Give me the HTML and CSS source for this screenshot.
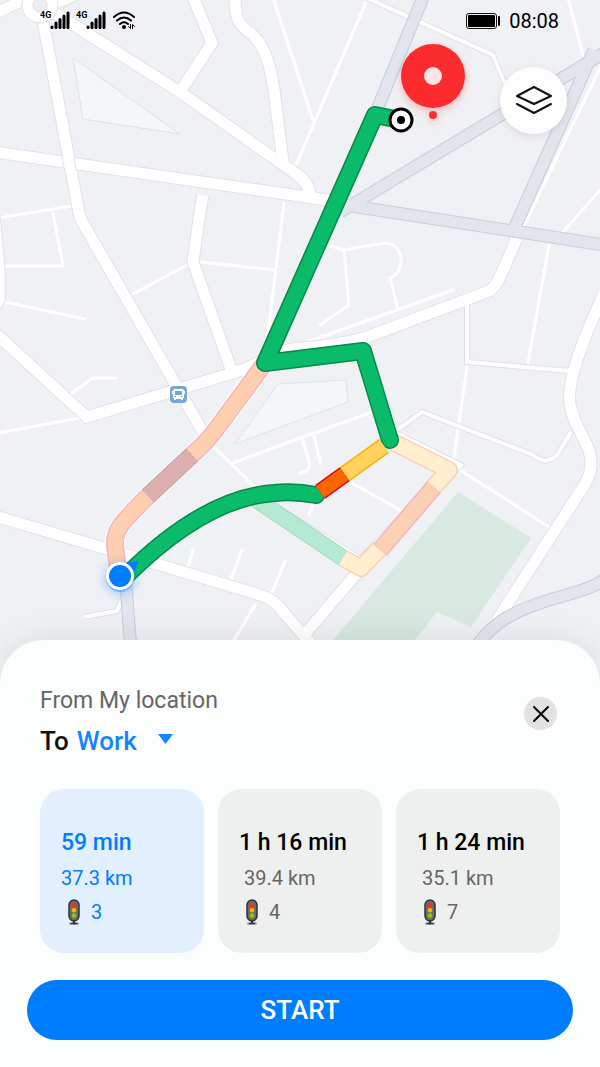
FILE: index.html
```html
<!DOCTYPE html>
<html lang="en">
<head>
    <meta charset="UTF-8">
    <meta name="viewport" content="width=device-width, initial-scale=1.0">
    <title>Routes to Work</title>
    <link rel="stylesheet" href="styles.css">
</head>
<body>
    <main class="map-view">
        <svg class="map" viewBox="0 0 600 700" preserveAspectRatio="xMidYMin slice" role="img" aria-label="Route map">
            <defs>
                <g id="main-roads">
                    <path d="M41,10 L80,218 L203,432"/>
                    <path d="M50,10 L180,92 L295,173 Q311,183 310,200"/>
                    <path d="M193,-3 L212,43 L180,92"/>
                    <path d="M235,-5 C235,20 239,24 249,32 C266,44 271,70 274,90 L283,162"/>
                    <path d="M203,195 L200,212 L193,262 L231,369"/>
                    <path d="M-6,215 L-1,268 V300 L-8,312"/>
                    <path d="M-6,332 L87,417 L236,372 C262,364 275,350 300,348 C325,347 345,343 367,337 L487,292 C498,287 501,274 517,238"/>
                    <path d="M604,293 C590,325 581,345 574,370 C567,395 568,408 578,427 L588,448 C593,460 592,472 585,484 L497,620"/>
                    <path d="M-5,516 L107,549 L257,594 C272,598 278,605 285,614 L325,660"/>
                    <path d="M363,566 L305,634"/>
                    <path d="M-6,14 L40,-8 M56,3 L84,-9"/>
                    <path d="M-5,152 L355,204"/>
                    <path d="M365,351 L394,436 L455,466 L361,563 L255,498 L318,490"/>
                </g>
                <g id="side-roads">
                    <path d="M367,-2 L493,55 L505,84"/>
                    <path d="M467,305 V362 L569,371"/>
                    <path d="M397,430 L422,412 L533,455 Q546,466 557,455 L571,432"/>
                    <path d="M84,617 L117,611 L123,597"/>
                </g>
                <g id="highways">
                    <path d="M424,-5 L376,112"/>
                    <path d="M340,212 L604,53"/>
                    <path d="M345,205 L604,245"/>
                    <path d="M594,50 L514,229"/>
                    <path d="M125,575 L135,700"/>
                    <path d="M604,580 C582,595 540,598 508,617 Q488,628 470,655"/>
                </g>
                <g id="route-main">
                    <path d="M400,120 L375,115 L265,363 L363,351 L390,440"/>
                    <path d="M125,577 Q204,498 274,493 Q295,491 316,495"/>
                </g>
                <g id="traffic-light">
                    <ellipse cx="6" cy="24.500" rx="5" ry="1.500" fill="#8a8f94"/>
                    <path d="M5,20 H7 V24 H9 V25 H3 V24 H5 Z" fill="#333"/>
                    <rect x="1" y="1" width="10" height="21" rx="5" fill="#6b6b6b" stroke="#333" stroke-width="1.500"/>
                    <circle cx="6" cy="6" r="2.300" fill="#fb2b2e"/>
                    <circle cx="6" cy="11.300" r="2.300" fill="#ffb400"/>
                    <circle cx="6" cy="16.600" r="2.300" fill="#7fd000"/>
                </g>
            </defs>

            <rect class="land" width="600" height="700"/>
            <path class="block" d="M73,58 L83,119 L180,134 Z"/>
            <path class="block" d="M278,384 L346,380 L348,402 L235,444 Z"/>
            <path class="park" d="M458,492 L531,538 L471,627 L437,612 L395,665 H312 Z"/>

            <!-- small streets -->
            <g class="streets">
                <path d="M273,-2 L313,120 M367,0 L293,172"/>
                <path d="M-2,218 L72,206 M53,213 L63,266 H5"/>
                <path d="M5,302 L85,319 M72,393 L93,378 H116"/>
                <path d="M-2,433 L80,418 M133,294 L187,265 M201,262 L275,270"/>
                <path d="M284,203 L268,333"/>
                <path d="M328,245 L344,250 L385,243 C405,244 406,272 390,278 L398,309"/>
                <path d="M344,250 L349,305 L320,325 M453,290 L307,342"/>
                <path d="M600,190 L562,233 M549,245 L528,363 M467,367 L454,457"/>
                <path d="M568,-2 L583,55 M602,64 L524,226"/>
                <path d="M460,470 L549,527 M350,482 L400,510"/>
                <path d="M370,413 L300,438 L233,463"/>
                <path d="M302,438 L309,461 Q311,472 300,473 M314,435 L320,462"/>
                <path d="M313,503 L309,515 M193,550 L188,567 M242,550 L230,582"/>
                <path d="M285,561 L270,597 M255,605 L233,642 M213,446 L255,487"/>
            </g>

            <use href="#side-roads" class="road-edge" stroke-width="6"/>
            <use href="#main-roads" class="road-edge" stroke-width="13"/>
            <use href="#side-roads" class="road" stroke-width="4"/>
            <use href="#main-roads" class="road" stroke-width="11"/>
            <path class="road-edge" stroke-width="1" d="M62,156 L64,168 M74,158 L76,170"/>
            <circle class="roundabout" cx="40" cy="5" r="18"/>
            <circle class="island" cx="40" cy="5" r="7"/>

            <use href="#highways" class="highway-edge" stroke-width="13"/>
            <use href="#highways" class="highway" stroke-width="11"/>

            <!-- other routes -->
            <g class="route">
                <path stroke="#fff" stroke-width="20" d="M265,363 L217,428 Q206,443 194,453 L148,496 C120,524 114,530 115,545 L118,570"/>
                <path stroke="#f4b5c0" stroke-width="18" d="M265,363 L217,428 Q206,443 194,453 L148,496 C120,524 114,530 115,545 L118,570"/>
                <path stroke="#fdcfb0" stroke-width="15" d="M265,363 L217,428 Q206,443 194,453 L148,496 C120,524 114,530 115,545 L118,570"/>
                <path stroke="#c5aaa9" stroke-width="18" d="M192,455 L148,496"/>
                <path stroke="#dcaeae" stroke-width="16" d="M192,455 L148,496"/>

                <path stroke="#a2d9c0" stroke-width="17" d="M257,500 L343,558"/>
                <path stroke="#b3ead1" stroke-width="15" d="M257,500 L343,558"/>
                <path stroke="#fdceb2" stroke-width="18" d="M343,558 L361,568 L380,548 M431,490 L449,470 L391,441"/>
                <path stroke="#ffefcf" stroke-width="15" d="M343,558 L361,568 L380,548 M431,490 L449,470 L391,441"/>
                <path stroke="#f2b5bf" stroke-width="18" d="M380,550 L434,487"/>
                <path stroke="#fcd0b4" stroke-width="15" d="M380,550 L434,487"/>
            </g>

            <!-- chosen route with its slow parts on top -->
            <use href="#route-main" class="route-edge"/>
            <use href="#route-main" class="route-fill"/>
            <g class="route">
                <path stroke="#d70c20" stroke-width="17" d="M320,492 L345,474"/>
                <path stroke="#fc6500" stroke-width="14" d="M320,492 L345,474"/>
                <path stroke="#f5b30a" stroke-width="17" d="M345,474 L384,446"/>
                <path stroke="#ffd25e" stroke-width="14" d="M345,474 L384,446"/>
            </g>

            <!-- bus stop -->
            <rect x="170" y="386" width="17" height="17" rx="4" fill="#77a6d9"/>
            <path fill="#fff" d="M175,389 H182 Q184,389 184,391 H185 V394 H184 V398 H183 V400 H181 V399 H176 V400 H174 V398 H173 V394 H172 V391 H173 Q173,389 175,389 Z"/>
            <path fill="#77a6d9" d="M175,391 H182 V395 H175 Z M174,396 H176 V397 H174 Z M181,396 H183 V397 H181 Z"/>

            <!-- my location -->
            <circle class="glow" cx="120" cy="578" r="14"/>
            <path fill="#007dff" d="M139,561 L125,563 L134,572 Z"/>
            <circle cx="120" cy="576" r="14" fill="#fff"/>
            <circle cx="120" cy="576" r="11" fill="#007dff"/>

            <!-- destination -->
            <circle cx="401" cy="120" r="11" fill="#fff" stroke="#000" stroke-width="3"/>
            <circle cx="401" cy="120" r="4" fill="#000"/>
            <g class="pin">
                <circle cx="433" cy="76" r="32" fill="#fb2b2e"/>
                <circle cx="433" cy="76" r="9" fill="#fde3e3"/>
                <circle cx="433" cy="115" r="4" fill="#fb2b2e"/>
            </g>
        </svg>

        <header class="status-bar">
            <div class="signals">
                <span class="network">4G</span>
                <svg class="bars" viewBox="0 0 20 18"><path d="M2,16 V16.500 M6,12 V16.500 M10,8.500 V16.500 M14,5 V16.500 M18,2 V16.500"/></svg>
                <span class="network second">4G</span>
                <svg class="bars" viewBox="0 0 20 18"><path d="M2,16 V16.500 M6,12 V16.500 M10,8.500 V16.500 M14,5 V16.500 M18,2 V16.500"/></svg>
                <svg class="wifi" viewBox="0 0 22 18">
                    <path d="M1,6 Q11,-3 21,6 M4,9.500 Q11,3.500 18,9.500 M7,13 Q11,9.500 15,13"/>
                    <circle cx="11" cy="16" r="2"/>
                    <path class="arrows" d="M17.500,13.500 V17.500 L15.500,15.500 M19.500,17.500 V13.500 L21.500,15.500"/>
                </svg>
            </div>
            <div class="clock">
                <svg class="battery" viewBox="0 0 34 16">
                    <rect x="0.500" y="0.500" width="30" height="15" rx="2.500" fill="none" stroke="#111"/>
                    <rect x="2" y="2" width="27" height="12" rx="1"/>
                    <rect x="32" y="3" width="2" height="10" rx="1"/>
                </svg>
                <time>08:08</time>
            </div>
        </header>

        <button class="layers" type="button" aria-label="Map layers">
            <svg viewBox="0 0 38 30"><path d="M19,1 L36,10 L19,18 L2,10 Z M2,18 L19,27 L36,18"/></svg>
        </button>
    </main>

    <section class="sheet">
        <div class="trip">
            <div class="places">
                <p class="from">From My location</p>
                <div class="to">
                    <label for="destination">To</label>
                    <select id="destination">
                        <option>Work</option>
                    </select>
                </div>
            </div>
            <button class="close" type="button" aria-label="Close">
                <svg viewBox="0 0 18 18"><path d="M2,2 L16,16 M16,2 L2,16"/></svg>
            </button>
        </div>

        <div class="options">
            <button class="option selected" type="button" aria-pressed="true">
                <span class="duration">59 min</span>
                <span class="distance">37.3 km</span>
                <span class="lights">
                    <svg class="light" viewBox="0 0 12 26"><use href="#traffic-light"/></svg>
                    3
                </span>
            </button>
            <button class="option" type="button" aria-pressed="false">
                <span class="duration">1 h 16 min</span>
                <span class="distance">39.4 km</span>
                <span class="lights">
                    <svg class="light" viewBox="0 0 12 26"><use href="#traffic-light"/></svg>
                    4
                </span>
            </button>
            <button class="option" type="button" aria-pressed="false">
                <span class="duration">1 h 24 min</span>
                <span class="distance">35.1 km</span>
                <span class="lights">
                    <svg class="light" viewBox="0 0 12 26"><use href="#traffic-light"/></svg>
                    7
                </span>
            </button>
        </div>

        <button class="start" type="button">START</button>
    </section>
</body>
</html>
```
FILE: styles.css
```css
* {
    box-sizing: border-box;
}

body {
    margin: 0;
    min-height: 100vh;
    display: flex;
    flex-direction: column;
    font-family: Roboto, "Noto Sans", sans-serif;
    background-color: #fcfdfd;
    color: #000;
}

button {
    border: none;
    padding: 0;
    font-family: inherit;
    cursor: pointer;
}

/* Map */
.map-view {
    position: relative;
}

.map {
    display: block;
    width: 100%;
    height: auto;
}

.land {
    fill: #f0f1f4;
}

.block {
    fill: #f5f6fa;
    stroke: #e0e1eb;
}

.park {
    fill: #d9e8e1;
}

.streets {
    fill: none;
    stroke: #fff;
    stroke-width: 3;
    stroke-linecap: round;
}

.road,
.road-edge,
.highway,
.highway-edge,
.route {
    fill: none;
}

.route {
    stroke-linejoin: round;
}

.road {
    stroke: #fff;
}

.road-edge {
    stroke: #e1e1ea;
}

.roundabout {
    fill: #fff;
    stroke: #e1e1ea;
}

.island {
    fill: #edeef2;
    stroke: #dcdde6;
}

.highway {
    stroke: #e2e6ec;
}

.highway-edge {
    stroke: #c3cddc;
}

.route-edge,
.route-fill {
    fill: none;
    stroke: #06894c;
    stroke-width: 18;
    stroke-linecap: round;
    stroke-linejoin: round;
}

.route-fill {
    stroke: #0abc6a;
    stroke-width: 15;
}

.glow {
    fill: #007dff;
    filter: drop-shadow(0 0 6px #007dff);
    opacity: 0.5;
}

.pin {
    filter: drop-shadow(0 3px 4px rgba(251, 43, 46, 0.3));
}

/* Status bar */
.status-bar {
    position: absolute;
    top: 0;
    left: 0;
    right: 0;
    display: flex;
    justify-content: space-between;
    padding: 10px 41px 0 40px;
}

.signals,
.clock {
    display: flex;
    align-items: center;
}

.signals {
    height: 20px;
}

.network {
    align-self: flex-start;
    width: 10px;
    font-size: 9px;
    font-weight: 700;
    line-height: 10px;
}

.second {
    margin-left: 6px;
}

.bars {
    width: 20px;
    height: 18px;
    fill: none;
    stroke: #000;
    stroke-width: 3;
    stroke-linecap: round;
}

.wifi {
    width: 22px;
    height: 18px;
    margin-left: 7px;
}

.wifi path {
    fill: none;
    stroke: #000;
    stroke-width: 2;
    stroke-linecap: round;
}

.wifi .arrows {
    stroke-width: 1;
}

.clock {
    gap: 9px;
    height: 22px;
    font-size: 20px;
}

.battery {
    width: 34px;
    height: 16px;
}

.layers {
    position: absolute;
    top: 67px;
    right: 33px;
    display: flex;
    align-items: center;
    justify-content: center;
    width: 67px;
    height: 67px;
    border-radius: 50%;
    background-color: #fdfdfd;
    box-shadow: 0 2px 8px rgba(0, 0, 0, 0.1);
}

.layers svg {
    width: 38px;
    height: 30px;
    fill: none;
    stroke: #111;
    stroke-width: 2;
    stroke-linejoin: round;
    stroke-linecap: round;
}

/* Bottom sheet */
.sheet {
    position: relative;
    flex: 1;
    margin-top: -60px;
    padding: 47px 27px 27px;
    border-radius: 44px 44px 0 0;
    background-color: #fcfdfd;
    box-shadow: 0 -4px 32px rgba(0, 0, 0, 0.08);
}

.trip {
    display: flex;
    justify-content: space-between;
    align-items: flex-start;
    padding: 0 16px 0 13px;
}

.from {
    margin: 0;
    font-size: 23px;
    line-height: 28px;
    color: #666;
}

.to {
    display: flex;
    align-items: center;
    gap: 8px;
    margin-top: 7px;
    font-size: 26px;
    font-weight: 500;
    line-height: 38px;
    color: #111;
}

.to select {
    appearance: none;
    width: 96px;
    padding: 0;
    border: none;
    font: inherit;
    color: #1485ff;
    background: url("data:image/svg+xml,%3Csvg xmlns='http://www.w3.org/2000/svg' viewBox='0 0 15 10'%3E%3Cpath d='M0 0H15L7.500 10Z' fill='%231485ff'/%3E%3C/svg%3E") right 0 top 12px / 15px 10px no-repeat;
}

.close {
    display: flex;
    align-items: center;
    justify-content: center;
    width: 33px;
    height: 33px;
    margin-top: 10px;
    border-radius: 50%;
    background-color: #e2e2e2;
}

.close svg {
    width: 18px;
    height: 18px;
    stroke: #000;
    stroke-width: 2;
    stroke-linecap: round;
}

.options {
    display: grid;
    grid-template-columns: repeat(3, 1fr);
    gap: 14px;
    margin: 29px 0 27px;
    padding: 0 13px;
}

.option {
    display: flex;
    flex-direction: column;
    align-items: flex-start;
    padding: 38px 0 24px 21px;
    border-radius: 24px;
    background-color: #eeefef;
    color: #666;
    font-size: 20px;
    line-height: 34px;
    white-space: nowrap;
}

.duration {
    font-size: 23px;
    font-weight: 500;
    line-height: 32px;
    color: #000;
}

.distance {
    margin-top: 2px;
    padding-left: 5px;
}

.lights {
    display: flex;
    align-items: center;
    gap: 11px;
    padding-left: 7px;
}

.light {
    width: 12px;
    height: 26px;
}

.selected {
    background-color: #e1effe;
}

.selected,
.selected .duration {
    color: #007dff;
}

.selected .distance {
    padding-left: 0;
}

.start {
    display: block;
    width: 100%;
    height: 60px;
    border-radius: 30px;
    background-color: #007dff;
    color: #fff;
    font-size: 26px;
    font-weight: 500;
}
```
